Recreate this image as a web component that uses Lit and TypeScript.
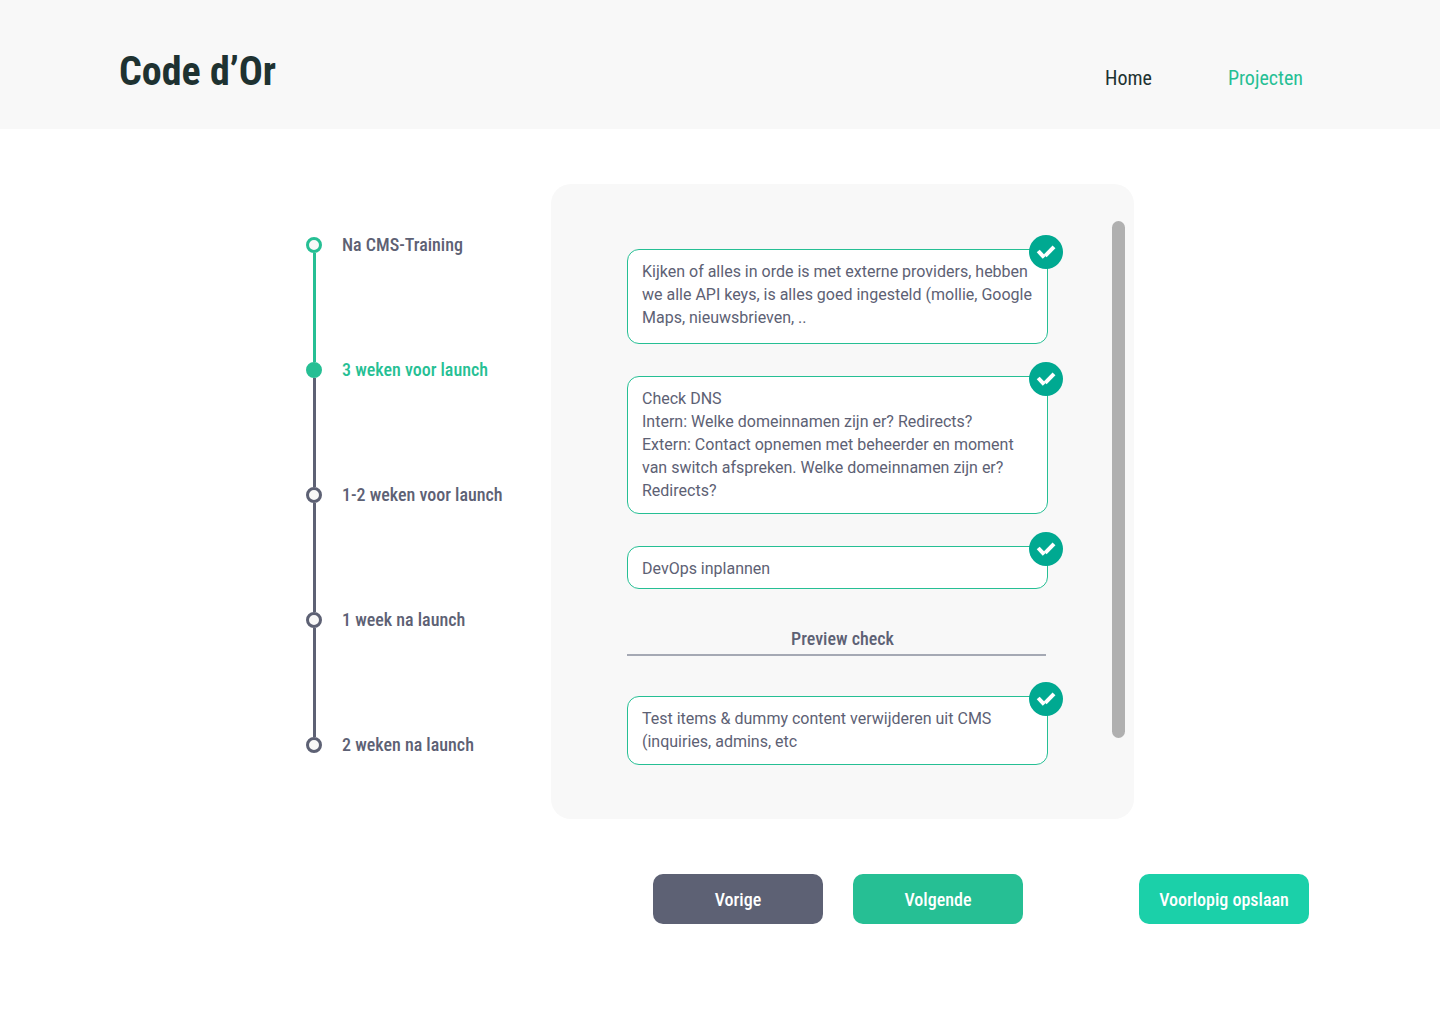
import { LitElement, html, css } from "lit";
import { customElement, property, state } from "lit/decorators.js";
import { classMap } from "lit/directives/class-map.js";

type StepState = "done" | "current" | "todo";

interface Step {
  label: string;
  state: StepState;
}

interface Task {
  id: string;
  lines: string[];
  size: "roomy" | "regular" | "compact";
  checked: boolean;
}

const STEPS: Step[] = [
  { label: "Na CMS-Training", state: "done" },
  { label: "3 weken voor launch", state: "current" },
  { label: "1-2 weken voor launch", state: "todo" },
  { label: "1 week na launch", state: "todo" },
  { label: "2 weken na launch", state: "todo" },
];

const LAUNCH_TASKS: Task[] = [
  {
    id: "providers",
    lines: [
      "Kijken of alles in orde is met externe providers, hebben we alle API keys, is alles goed ingesteld (mollie, Google Maps, nieuwsbrieven, ..",
    ],
    size: "roomy",
    checked: true,
  },
  {
    id: "dns",
    lines: [
      "Check DNS",
      "Intern: Welke domeinnamen zijn er? Redirects?",
      "Extern: Contact opnemen met beheerder en moment van switch afspreken. Welke domeinnamen zijn er? Redirects?",
    ],
    size: "regular",
    checked: true,
  },
  { id: "devops", lines: ["DevOps inplannen"], size: "compact", checked: true },
];

const PREVIEW_TASKS: Task[] = [
  {
    id: "dummy",
    lines: ["Test items & dummy content verwijderen uit CMS (inquiries, admins, etc"],
    size: "regular",
    checked: true,
  },
];

@customElement("task-card")
class TaskCard extends LitElement {
  @property({ attribute: false }) task!: Task;
  @state() private checked = false;

  static styles = css`
    :host {
      display: block;
    }
    .card {
      position: relative;
      display: block;
      box-sizing: border-box;
      padding: 10px 8px 11px 14px;
      border: 1px solid #26bf94;
      border-radius: 12px;
      background: #fff;
      color: #5d6174;
      font: 400 16px/23px Roboto, sans-serif;
      cursor: pointer;
    }
    .roomy {
      padding-bottom: 14px;
    }
    .compact {
      padding-bottom: 8px;
    }
    .line {
      display: block;
    }
    .badge {
      position: absolute;
      top: -15px;
      right: -16px;
      display: grid;
      width: 34px;
      height: 34px;
    }
    .box {
      grid-area: 1 / 1;
      appearance: none;
      margin: 0;
      border: 0;
      border-radius: 50%;
      background: #c4c4c4;
      cursor: pointer;
    }
    .box:checked {
      background: #00a991;
    }
    .box:focus-visible {
      outline: 2px solid #5d6174;
      outline-offset: 2px;
    }
    .tick {
      grid-area: 1 / 1;
      pointer-events: none;
    }
  `;

  connectedCallback() {
    super.connectedCallback();
    this.checked = this.task.checked;
  }

  render() {
    return html`
      <label class=${classMap({ card: true, [this.task.size]: true })}>
        ${this.task.lines.map((line) => html`<span class="line">${line}</span>`)}
        <span class="badge">
          <input
            class="box"
            type="checkbox"
            name=${this.task.id}
            .checked=${this.checked}
            @change=${(e: Event) => (this.checked = (e.target as HTMLInputElement).checked)}
          />
          <svg class="tick" viewBox="0 0 34 34" width="34" height="34" aria-hidden="true">
            <g fill="none" stroke="#fff" stroke-width="4">
              <path d="M9.2 16 L15.2 22.4" />
              <path d="M16.2 20.8 L25 11.8" />
            </g>
          </svg>
        </span>
      </label>
    `;
  }
}

@customElement("step-list")
class StepList extends LitElement {
  static styles = css`
    :host {
      display: block;
    }
    .steps {
      margin: 0;
      padding: 0;
      list-style: none;
    }
    .step {
      display: grid;
      grid-template-columns: 16px 1fr;
      column-gap: 20px;
      color: #5d6174;
      font: 500 18px/24px "Roboto Condensed", "Liberation Sans Narrow", Roboto, sans-serif;
    }
    .rail {
      display: flex;
      flex-direction: column;
      align-items: center;
      height: 125px;
      padding-top: 4px;
      box-sizing: border-box;
    }
    .step:last-child .rail {
      height: 24px;
    }
    .dot {
      flex: none;
      box-sizing: border-box;
      width: 16px;
      height: 16px;
      border: 3px solid #5d6174;
      border-radius: 50%;
      background: #f8f8f8;
    }
    .bar {
      flex: none;
      width: 3px;
      height: 109px;
      background: #5d6174;
    }
    .done .dot {
      border-color: #26bf94;
    }
    .done .bar {
      background: #26bf94;
    }
    .current {
      color: #26bf94;
    }
    .current .dot {
      border-color: #26bf94;
      background: #26bf94;
    }
  `;

  render() {
    return html`
      <ol class="steps">
        ${STEPS.map(
          (step, i) => html`
            <li
              class=${classMap({ step: true, [step.state]: true })}
              aria-current=${step.state === "current" ? "step" : "false"}
            >
              <span class="rail">
                <span class="dot"></span>
                ${i < STEPS.length - 1 ? html`<span class="bar"></span>` : null}
              </span>
              <span class="label">${step.label}</span>
            </li>
          `
        )}
      </ol>
    `;
  }
}

@customElement("app-root")
class AppRoot extends LitElement {
  static styles = css`
    :host {
      display: block;
      min-height: 100vh;
      background: #fff;
      color: #1e3231;
      font-family: "Roboto Condensed", "Liberation Sans Narrow", Roboto, sans-serif;
    }
    .header {
      display: flex;
      align-items: flex-end;
      justify-content: space-between;
      padding: 48px 137px 34px 119px;
      background: #f8f8f8;
    }
    .brand {
      margin: 0;
      font-size: 40px;
      line-height: 47px;
      font-weight: 700;
    }
    .nav {
      display: flex;
      gap: 76px;
    }
    .link {
      color: #1e3231;
      font-size: 20px;
      line-height: 34px;
      text-decoration: none;
    }
    .active {
      color: #26bf94;
    }
    .main {
      display: grid;
      grid-template-columns: 245px minmax(0, 1fr) 175px;
      padding: 55px 131px 100px 306px;
    }
    .timeline {
      padding-top: 49px;
    }
    .panel {
      display: flex;
      align-items: flex-start;
      justify-content: space-between;
      padding: 37px 9px 53px 76px;
      border-radius: 20px;
      background: #f8f8f8;
    }
    .tasks {
      display: flex;
      flex-direction: column;
      flex: 1;
      gap: 32px;
      margin-right: 64px;
      padding: 28px 0 1px;
    }
    .subhead {
      margin: 6px 2px 8px 0;
      padding: 0 0 3px 12px;
      border-bottom: 2px solid #a5a9b4;
      color: #5d6174;
      font-size: 18px;
      line-height: 24px;
      font-weight: 500;
      text-align: center;
    }
    .scrollbar {
      align-self: stretch;
      width: 13px;
      margin-bottom: 28px;
      border-radius: 7px;
      background: #b0b0b0;
    }
    .actions {
      grid-column: 2 / 4;
      display: flex;
      gap: 30px;
      margin-top: 55px;
      padding-left: 102px;
    }
    .button {
      width: 170px;
      height: 50px;
      padding: 2px 0 0;
      border: 0;
      border-radius: 10px;
      color: #fff;
      font: inherit;
      font-size: 18px;
      font-weight: 500;
      line-height: 24px;
      cursor: pointer;
    }
    .previous {
      background: #5d6174;
    }
    .next {
      background: #26bf94;
    }
    .save {
      margin-left: auto;
      background: #1bd0a9;
    }
  `;

  render() {
    return html`
      <header class="header">
        <h1 class="brand">Code d’Or</h1>
        <nav class="nav">
          <a class="link" href="#home">Home</a>
          <a class="link active" href="#projecten" aria-current="page">Projecten</a>
        </nav>
      </header>
      <main class="main">
        <step-list class="timeline"></step-list>
        <section class="panel">
          <div class="tasks">
            ${LAUNCH_TASKS.map((task) => html`<task-card .task=${task}></task-card>`)}
            <h2 class="subhead">Preview check</h2>
            ${PREVIEW_TASKS.map((task) => html`<task-card .task=${task}></task-card>`)}
          </div>
          <div class="scrollbar"></div>
        </section>
        <div class="actions">
          <button class="button previous" type="button">Vorige</button>
          <button class="button next" type="button">Volgende</button>
          <button class="button save" type="button">Voorlopig opslaan</button>
        </div>
      </main>
    `;
  }
}
